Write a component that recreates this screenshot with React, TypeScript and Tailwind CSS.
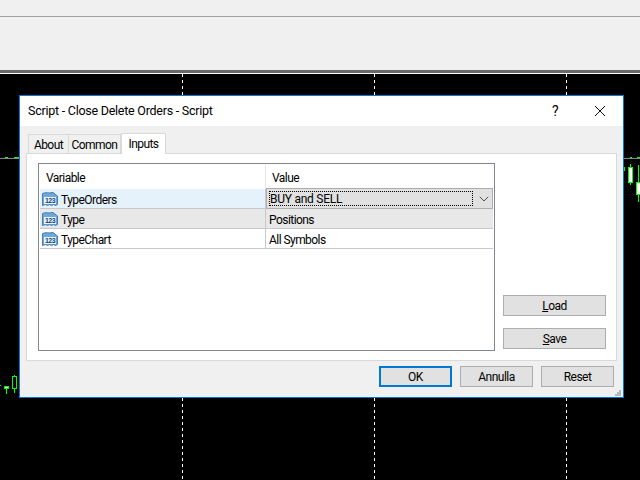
import React from 'react';
import { ChevronDown } from 'lucide-react';

const font = "font-['Roboto',Arial,sans-serif]";

const ParamIcon = () => (
  <svg width="18" height="16" viewBox="0 0 18 16" className="shrink-0">
    <path d="M1.5 2.5 C4 1.5 6 1.5 8 2 L12 1.5 L16.5 5 V13.5 L14.5 14.5 L12.5 13.5 L10.5 14.5 L8.5 13.5 L6.5 14.5 L4.5 13.5 L1.5 14.5 Z" fill="#6fa8d8" stroke="#3f7fb5" strokeWidth="1" />
    <rect x="3" y="6" width="12" height="7" fill="#e8f2fa" />
    <text x="9" y="12" textAnchor="middle" fontSize="7" fontWeight="700" fill="#17457a" fontFamily="Liberation Sans">123</text>
  </svg>
);

const Button = ({ children, className = 'border border-[#adadad]' }: { children: React.ReactNode; className?: string }) => (
  <div className={`flex h-[21px] items-center justify-center bg-[#e1e1e1] pt-[1px] text-[12px] tracking-[-0.5px] text-black ${className}`}>
    {children}
  </div>
);

const Row = ({ name, value, className = '' }: { name: string; value: React.ReactNode; className?: string }) => (
  <div className={`flex h-[20px] border-b border-[#c8c8c8] ${className}`}>
    <div className="flex w-[226px] items-center gap-[2px] border-r border-[#c8c8c8] pl-[1px]">
      <ParamIcon />
      <span className="pt-[2px]">{name}</span>
    </div>
    <div className="flex flex-1 items-center pl-[3px] pt-[2px]">{value}</div>
  </div>
);

// chart behind the dialog: dashed grid lines and a few candles
const Chart = () => (
  <svg className="h-full w-full" viewBox="0 0 640 406">
    <path d="M182.5 0V406M374.5 0V406M566.5 0V406" stroke="#fff" strokeDasharray="3 3" />
    <path d="M0 84.5H19M623 84.5H640" stroke="#7d8a96" />
    <path d="M5 83.5H8M14 83.5H19M630 83.5H632M637 83.5H640" stroke="#00ff00" />
    {/* left candles */}
    <path d="M0 311.5H1" stroke="#00ff00" />
    <rect x="4.5" y="312.5" width="4" height="2" fill="#fff" stroke="#00ff00" />
    <path d="M6.5 315V320" stroke="#00ff00" />
    <rect x="12.5" y="302.5" width="4" height="12" fill="none" stroke="#00ff00" />
    <path d="M14.5 301V303M14.5 315V319" stroke="#00ff00" />
    {/* right candles */}
    <path d="M624.5 93V97" stroke="#00ff00" />
    <rect x="628.5" y="93.5" width="4" height="15" fill="#fff" stroke="#00ff00" />
    <path d="M630.5 90V94M630.5 109V111" stroke="#00ff00" />
    <rect x="636.5" y="108.5" width="6" height="12" fill="#fff" stroke="#00ff00" />
    <path d="M638.5 91V109M638.5 121V128" stroke="#00ff00" />
  </svg>
);

const App: React.FC = () => {
  return (
    <div className={`relative flex h-[480px] w-[640px] flex-col overflow-hidden bg-black ${font}`}>
      {/* toolbars */}
      <div className="h-[16px] bg-[#f0f0f0]" />
      <div className="h-[54px] border-t border-[#a0a0a0] bg-[#f0f0f0]" />
      <div className="h-[3px] bg-[#696969]" />
      <div className="h-[1px] bg-white" />
      <div className="min-h-0 flex-1">
        <Chart />
      </div>

      {/* dialog */}
      <div className="absolute left-[19px] top-[95px] flex h-[303px] w-[605px] flex-col border border-[#0078d7] bg-[#f0f0f0] text-[12px] tracking-[-0.55px] text-black">
        <div className="flex h-[30px] items-center justify-between bg-white pl-[8px]">
          <span className="text-[12.5px] tracking-[-0.25px]">Script - Close Delete Orders - Script</span>
          <div className="flex items-center">
            <span className="mr-[36px] text-[14px]">?</span>
            <svg width="12" height="12" viewBox="0 0 12 12" className="mr-[17px]">
              <path d="M1 1L11 11M11 1L1 11" stroke="#111" strokeWidth="1" />
            </svg>
          </div>
        </div>

        {/* tabs */}
        <div className="flex h-[27px] items-end pl-[8px]">
          <div className="flex h-[19px] w-[41px] items-center justify-center border border-b-0 border-[#d9d9d9] bg-[#f0f0f0] pt-[2px]">About</div>
          <div className="flex h-[19px] w-[52px] items-center justify-center border border-b-0 border-l-0 border-[#d9d9d9] bg-[#f0f0f0] pt-[2px]">Common</div>
          <div className="z-10 -mb-[1px] flex h-[21px] w-[45px] items-center justify-center border border-b-0 border-[#d9d9d9] bg-white">Inputs</div>
        </div>

        {/* tab page */}
        <div className="ml-[6px] flex h-[208px] w-[591px] border border-[#d9d9d9] bg-white pl-[11px] pt-[9px]">
          <div className="h-[188px] w-[457px] border border-[#828790] p-[1px]">
            <div className="flex h-[24px] items-center">
              <div className="flex h-full w-[226px] items-center border-r border-[#e5e5e5] pl-[6px] pt-[2px]">Variable</div>
              <div className="pl-[6px] pt-[2px]">Value</div>
            </div>
            <Row
              name="TypeOrders"
              className="bg-[#e5f1fb]"
              value={
                <div className="-ml-[3px] -mt-[2px] flex h-[21px] flex-1 items-center border border-[#adadad] bg-[#e1e1e1] pl-[2px]">
                  <div className="flex h-[15px] w-[204px] items-center border border-dotted border-black pt-[1px] text-[12px] tracking-[-0.25px]">BUY and SELL</div>
                  <ChevronDown className="ml-[3px] h-[16px] w-[16px] text-[#333]" strokeWidth={1.25} />
                </div>
              }
            />
            <Row name="Type" value="Positions" className="bg-[#e8e8e8]" />
            <Row name="TypeChart" value="All Symbols" />
          </div>
          <div className="ml-[8px] flex w-[103px] flex-col gap-[12px] pt-[132px]">
            <Button><span><u>L</u>oad</span></Button>
            <Button><span><u>S</u>ave</span></Button>
          </div>
        </div>

        {/* footer */}
        <div className="relative flex flex-1 items-start justify-end gap-[8px] pr-[9px] pt-[5px]">
          <Button className="w-[73px] border-2 border-[#0078d7]">OK</Button>
          <Button className="w-[73px] border border-[#adadad]">Annulla</Button>
          <Button className="w-[73px] border border-[#adadad]">Reset</Button>
          <svg width="8" height="8" viewBox="0 0 8 8" className="absolute bottom-0 right-[1px]">
            <path d="M5 1h2v2H5zM3 3h2v2H3zM5 3h2v2H5zM1 5h2v2H1zM3 5h2v2H3zM5 5h2v2H5z" fill="#b8b8b8" />
          </svg>
        </div>
      </div>
    </div>
  );
};

export default App;
